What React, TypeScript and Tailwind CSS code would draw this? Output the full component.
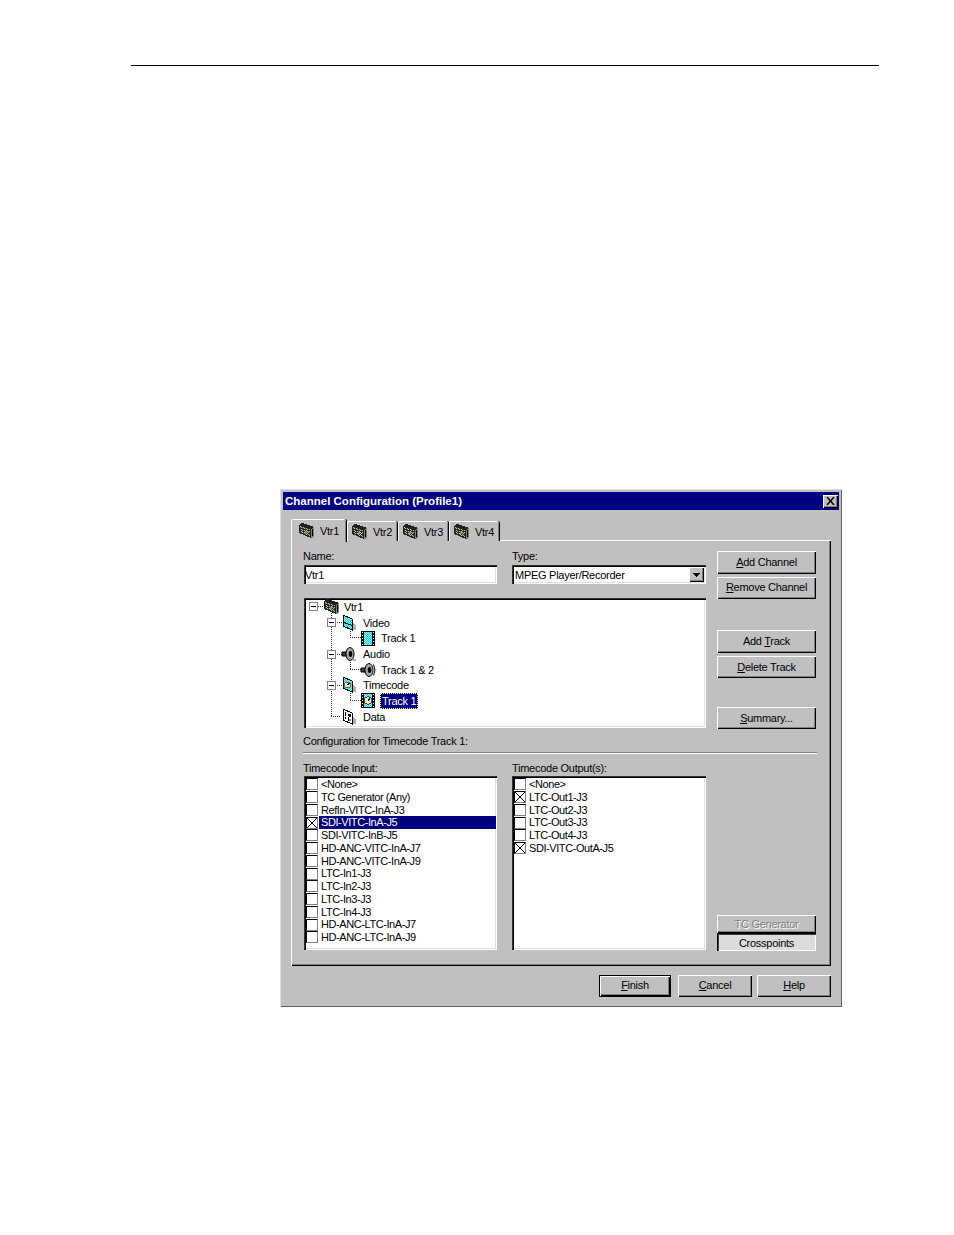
import React from "react";

const raised = "bg-[#c0c0c0] shadow-[inset_1px_1px_0_#fff,inset_-1px_-1px_0_#000,inset_-2px_-2px_0_#808080]";
const sunken = "bg-white shadow-[inset_1px_1px_0_#303030,inset_2px_2px_0_#000,inset_-1px_-1px_0_#fff,inset_-2px_-2px_0_#dfdfdf]";

function Dither({ id, a, b }: { id: string; a: string; b: string }) {
  return (
    <defs>
      <pattern id={id} width="2" height="2" patternUnits="userSpaceOnUse">
        <rect width="2" height="2" fill={a} />
        <rect width="1" height="1" fill={b} />
        <rect x="1" y="1" width="1" height="1" fill={b} />
      </pattern>
    </defs>
  );
}

function Rack({ id }: { id: string }) {
  return (
    <svg width="16" height="16" viewBox="0 0 16 16" shapeRendering="crispEdges" className="shrink-0">
      <Dither id={id} a="#404040" b="#c0c0a8" />
      <polygon points="0,2 3,0 15,4 15,14 12,15 0,10" fill="#202020" />
      <polygon points="1,3 11,6 11,13 1,9" fill={`url(#${id})`} />
      <polygon points="12,6 15,4 15,14 12,15" fill="#808080" />
      <path d="M1 5L11 8M1 7.5L11 10.5" stroke="#202020" />
      <rect x="6" y="8" width="2" height="2" fill="#22dd22" />
      <rect x="13" y="6" width="1" height="7" fill="#000" />
    </svg>
  );
}

function Panel({ id, children }: { id: string; children?: React.ReactNode }) {
  return (
    <svg width="16" height="16" viewBox="0 0 16 16" shapeRendering="crispEdges" className="shrink-0">
      <Dither id={id} a="#20d8d8" b="#90ecec" />
      <polygon points="12,8 15,10 15,15 12,15" fill="#b0b0b0" />
      <polygon points="2,0 11,4 11,15 2,11" fill={`url(#${id})`} stroke="#000" strokeWidth="1" />
      {children}
    </svg>
  );
}

const VideoIcon = () => (
  <Panel id="pv">
    <path d="M2 7L11 10.5" stroke="#000" />
  </Panel>
);

const ClockPanel = () => (
  <Panel id="pc">
    <circle cx="6.5" cy="8" r="3" fill="#e8e8c8" stroke="#606060" />
    <path d="M6.5 8L8.5 6" stroke="#000" />
  </Panel>
);

const DataIcon = () => (
  <svg width="16" height="16" viewBox="0 0 16 16" shapeRendering="crispEdges" className="shrink-0">
    <polygon points="12,8 15,10 15,15 12,15" fill="#b0b0b0" />
    <polygon points="2,0 11,4 11,15 2,11" fill="#fff" stroke="#000" />
    <path d="M4 3V7M7 5V7M4 8V10M7 8V12" stroke="#000" />
    <rect x="8" y="5" width="2" height="3" fill="#000" />
    <rect x="8" y="10" width="2" height="2" fill="#808080" />
  </svg>
);

const Film = ({ id, clock = false }: { id: string; clock?: boolean }) => (
  <svg width="14" height="15" viewBox="0 0 14 15" shapeRendering="crispEdges" className="shrink-0">
    <Dither id={id} a="#20d8d8" b="#90ecec" />
    <rect x="0" y="0" width="14" height="15" fill="#000" />
    <rect x="3" y="1" width="8" height="13" fill={`url(#${id})`} />
    <path d="M1.5 1V14M12.5 1V14" stroke="#fff" strokeWidth="1" strokeDasharray="1 2" />
    {clock && <circle cx="7" cy="7.5" r="3.7" fill="#e8e8c8" stroke="#404040" />}
    {clock && <path d="M7 7.5L9 5.5" stroke="#000" />}
  </svg>
);

const Speaker = ({ waves = false }: { waves?: boolean }) => (
  <svg width="16" height="16" viewBox="0 0 16 16" className="shrink-0">
    <polygon points="1,6 5,6 8,2 8,14 5,10 1,10" fill="#404040" stroke="#000" />
    <ellipse cx="9" cy="8" rx="4" ry="6.5" fill="#a8a8a8" stroke="#000" />
    <ellipse cx="9.5" cy="8" rx="1.8" ry="3" fill="#000" />
    {waves && <path d="M13.5 2.5Q16.5 8 13.5 13.5" stroke="#000" fill="none" />}
    {!waves && <rect x="12" y="13" width="3" height="2" fill="#b0b0b0" />}
  </svg>
);

function Btn({ children, className = "" }: { children: React.ReactNode; className?: string }) {
  return <div className={`w-[99px] flex items-center justify-center ${raised} ${className}`}>{children}</div>;
}

function Row({ pad, icon, label, gap }: { pad: string; icon: React.ReactNode; label: React.ReactNode; gap: string }) {
  return (
    <div className={`h-[15.7px] flex items-center ${pad}`}>
      {icon}
      <span className={gap}>{label}</span>
    </div>
  );
}

const X = () => (
  <svg width="10" height="10" viewBox="0 0 10 10" className="block">
    <path d="M0 0L10 10M10 0L0 10" stroke="#000" strokeWidth="1" />
  </svg>
);

function Item({ label, checked, selected }: { label: string; checked?: boolean; selected?: boolean }) {
  return (
    <div className="h-[12.75px] flex items-center pl-[2px]">
      <div className="w-[12px] h-[12px] shrink-0 bg-white border border-t-black border-l-black border-r-[#808080] border-b-[#808080] flex items-center justify-center">
        {checked && <X />}
      </div>
      <div className={`ml-px flex-1 h-full pl-[2px] leading-[12.75px] tracking-[-0.42px] whitespace-nowrap ${selected ? "bg-[#000080] text-white" : ""}`}>{label}</div>
    </div>
  );
}

function TreeLines() {
  return (
    <svg width="402" height="130" className="absolute left-0 top-0" shapeRendering="crispEdges">
      <g stroke="#303030" strokeDasharray="1 1" fill="none">
        <path d="M27.5 13V119M27 118.5H37" />
        <path d="M14 8.5H20" />
        <path d="M31 24.5H38M31 56.5H38M31 87.5H38" />
        <path d="M46.5 31V40M46 39.5H57" />
        <path d="M46.5 62V72M46 71.5H57" />
        <path d="M46.5 93V103M46 102.5H57" />
      </g>
      {[[5, 4], [23, 20], [23, 52], [23, 83]].map(([x, y]) => (
        <g key={y}>
          <rect x={x + 0.5} y={y + 0.5} width="8" height="8" fill="#fff" stroke="#808080" />
          <path d={`M${x + 2} ${y + 4.5}H${x + 7}`} stroke="#000" />
        </g>
      ))}
    </svg>
  );
}

const inputs = ["<None>", "TC Generator (Any)", "RefIn-VITC-InA-J3", "SDI-VITC-InA-J5", "SDI-VITC-InB-J5", "HD-ANC-VITC-InA-J7", "HD-ANC-VITC-InA-J9", "LTC-In1-J3", "LTC-In2-J3", "LTC-In3-J3", "LTC-In4-J3", "HD-ANC-LTC-InA-J7", "HD-ANC-LTC-InA-J9"];
const outputs = ["<None>", "LTC-Out1-J3", "LTC-Out2-J3", "LTC-Out3-J3", "LTC-Out4-J3", "SDI-VITC-OutA-J5"];

function Tab({ label, active, w }: { label: string; active?: boolean; w: string }) {
  return (
    <div className={`${w} flex items-center rounded-t-[2px] bg-[#c0c0c0] border-t border-l border-white shadow-[inset_-1px_0_0_#808080,1px_0_0_#000] ${active ? "h-[23px] pl-[7px] z-10 relative" : "h-[20px] mt-[2px] pl-[4px]"}`}>
      <Rack id={`rack-${label}`} />
      <span className="ml-[5px]">{label}</span>
    </div>
  );
}

export default function App() {
  return (
    <div className="w-[954px] h-[1235px] bg-white pt-[65px] text-[11px] leading-[12px] tracking-[-0.27px] text-black font-['Liberation_Sans',Arial,sans-serif]">
      <div className="ml-[131px] w-[748px] h-px bg-black" />
      <div className="ml-[280px] mt-[423px] w-[562px] h-[518px] bg-[#c0c0c0] pt-[3px] shadow-[inset_1px_1px_0_#dfdfdf,inset_-1px_-1px_0_#606060]">
        <div className="ml-[3px] mr-[3px] h-[18px] bg-[#000080] flex items-center justify-between pl-[2px] pr-px">
          <span className="text-white font-bold text-[11.5px] tracking-normal">Channel Configuration (Profile1)</span>
          <div className={`w-[15px] h-[13px] flex items-center justify-center ${raised}`}>
            <svg width="9" height="8" viewBox="0 0 9 8"><path d="M1 0L8 8M8 0L1 8" stroke="#000" strokeWidth="1.5" /></svg>
          </div>
        </div>
        <div className="mt-[9px] ml-[11px] flex h-[21px] gap-px items-start">
          <Tab label="Vtr1" active w="w-[55px]" />
          <Tab label="Vtr2" w="w-[50px]" />
          <Tab label="Vtr3" w="w-[50px]" />
          <Tab label="Vtr4" w="w-[50px]" />
        </div>
        <div className="ml-[11px] w-[540px] h-[426px] pt-[11px] pl-[13px] shadow-[inset_1px_1px_0_#fff,inset_-1px_-1px_0_#000,inset_-2px_-2px_0_#808080]">
          <div className="flex gap-[11px]">
            <div className="w-[402px] -mt-[2px]">
              <div className="flex gap-[15px]">
                <div className="w-[193px]">
                  <div className="h-[16px] pt-px -ml-px">Name:</div>
                  <div className={`h-[19px] flex items-center pl-px ${sunken}`}>Vtr1</div>
                </div>
                <div className="w-[194px]">
                  <div className="h-[16px] pt-px">Type:</div>
                  <div className={`h-[19px] flex items-center justify-between pl-[3px] pr-[2px] ${sunken}`}>
                    <span>MPEG Player/Recorder</span>
                    <div className={`w-[15px] h-[15px] flex items-center justify-center ${raised}`}>
                      <svg width="7" height="4" viewBox="0 0 7 4" shapeRendering="crispEdges"><polygon points="0,0 7,0 3.5,4" fill="#000" /></svg>
                    </div>
                  </div>
                </div>
              </div>
              <div className={`relative mt-[14px] h-[130px] pt-px ${sunken}`}>
                <TreeLines />
                <div className="relative">
                  <Row pad="pl-[20px]" icon={<Rack id="rack-tree" />} label="Vtr1" gap="ml-[4px]" />
                  <Row pad="pl-[37px]" icon={<VideoIcon />} label="Video" gap="ml-[6px]" />
                  <Row pad="pl-[57px]" icon={<Film id="f1" />} label="Track 1" gap="ml-[6px]" />
                  <Row pad="pl-[37px]" icon={<Speaker />} label="Audio" gap="ml-[6px]" />
                  <Row pad="pl-[56px]" icon={<Speaker waves />} label="Track 1 & 2" gap="ml-[5px]" />
                  <Row pad="pl-[37px]" icon={<ClockPanel />} label="Timecode" gap="ml-[6px]" />
                  <Row pad="pl-[57px]" icon={<Film id="f2" clock />} label={<span className="inline-block h-[16px] leading-[14px] px-px bg-[#000080] text-white border border-dotted border-[#ffff80]">Track 1</span>} gap="ml-[5px]" />
                  <Row pad="pl-[37px]" icon={<DataIcon />} label="Data" gap="ml-[6px]" />
                </div>
              </div>
              <div className="mt-[7px] h-[12px] -ml-px">Configuration for Timecode Track 1:</div>
            </div>
            <div className="w-[99px]">
              <Btn className="h-[23px] pb-[2px]"><span><u>A</u>dd Channel</span></Btn>
              <Btn className="h-[22px] mt-[3px] pb-[2px]"><span><u>R</u>emove Channel</span></Btn>
              <Btn className="h-[23px] mt-[31px] pb-[2px]"><span>Add <u>T</u>rack</span></Btn>
              <Btn className="h-[22px] mt-[3px]"><span><u>D</u>elete Track</span></Btn>
              <Btn className="h-[22px] mt-[29px]"><span><u>S</u>ummary...</span></Btn>
            </div>
          </div>
          <div className="mt-[5px] -ml-px w-[514px] h-[2px] bg-[#808080] border-b border-white" />
          <div className="mt-[8px] flex gap-[11px]">
            <div className="w-[402px] flex gap-[15px]">
              <div className="w-[193px]">
                <div className="h-[14px] -ml-px">Timecode Input:</div>
                <div className={`h-[174px] pt-[2px] pr-px ${sunken}`}>
                  {inputs.map((s) => <Item key={s} label={s} checked={s === "SDI-VITC-InA-J5"} selected={s === "SDI-VITC-InA-J5"} />)}
                </div>
              </div>
              <div className="w-[194px]">
                <div className="h-[14px]">Timecode Output(s):</div>
                <div className={`h-[174px] pt-[2px] pr-px ${sunken}`}>
                  {outputs.map((s) => <Item key={s} label={s} checked={s === "LTC-Out1-J3" || s === "SDI-VITC-OutA-J5"} />)}
                </div>
              </div>
            </div>
            <div className="w-[99px] h-[189px] flex flex-col justify-end">
              <Btn className="h-[18px] text-[#808080] [text-shadow:1px_1px_0_#fff]">TC Generator</Btn>
              <div className="h-[18px] pt-px w-[99px] flex items-center justify-center bg-[#dcdcdc] shadow-[inset_1px_1px_0_#000,inset_2px_2px_0_#404040,inset_-1px_-1px_0_#fff]">Crosspoints</div>
            </div>
          </div>
        </div>
        <div className="mt-[9px] pr-[11px] flex justify-end">
          <div className="w-[72px] h-[22px] border border-black mr-[7px]">
            <div className={`w-full h-full pb-[2px] flex items-center justify-center ${raised}`}><span><u>F</u>inish</span></div>
          </div>
          <div className={`w-[74px] h-[22px] pb-[2px] flex items-center justify-center mr-[5px] ${raised}`}><span><u>C</u>ancel</span></div>
          <div className={`w-[74px] h-[22px] pb-[2px] flex items-center justify-center ${raised}`}><span><u>H</u>elp</span></div>
        </div>
      </div>
    </div>
  );
}
